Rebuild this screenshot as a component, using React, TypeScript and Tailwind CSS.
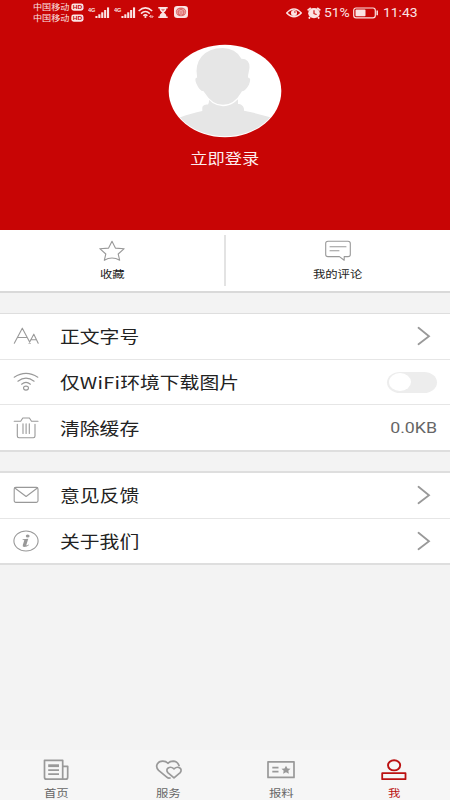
import React from 'react';

const outline = {
  fill: 'none',
  stroke: '#999999',
  strokeWidth: 1.1,
  strokeLinecap: 'round',
  strokeLinejoin: 'round',
} as const;

const Signal = () => (
  <svg viewBox="0 0 22 12" className="w-[22px] h-3" fill="#fbe3e3">
    <text x="0" y="4.9" fontSize="6.2" fontWeight="700" fontFamily="Liberation Sans, sans-serif" textLength="7.5" lengthAdjust="spacingAndGlyphs">
      4G
    </text>
    <rect x="7.4" y="9" width="2.1" height="2" />
    <rect x="10.3" y="7.3" width="2.1" height="3.7" />
    <rect x="13.2" y="5.3" width="2.1" height="5.7" />
    <rect x="16.1" y="3" width="2.1" height="8" />
    <rect x="19" y="0.4" width="2.1" height="10.6" />
  </svg>
);

const Carrier = () => (
  <div className="flex items-center h-[11px]">
    <div className="flex w-[37px] whitespace-nowrap">
      <span className="origin-left scale-x-[1.2] text-[7.6px] leading-[11px]">中国移动</span>
    </div>
    <svg viewBox="0 0 13 8" className="w-[13px] h-2 ml-px">
      <rect x="0.3" y="0.5" width="12.2" height="7.2" rx="2.4" fill="#fbe3e3" />
      <text x="1.7" y="6.3" fontSize="6" fontWeight="700" fill="#c80505" fontFamily="Liberation Sans, sans-serif" textLength="9.4" lengthAdjust="spacingAndGlyphs">
        HD
      </text>
    </svg>
  </div>
);

const StatusBar = () => (
  <div className="flex items-start justify-between h-[26px] pl-[33px] pr-8 text-[#fbe3e3]">
    <div className="flex items-start">
      <div className="mt-[1px]">
        <Carrier />
        <Carrier />
      </div>
      <div className="flex mt-[7px] ml-[4px]">
        <Signal />
        <div className="ml-[4px] mr-[2px]">
          <Signal />
        </div>
        <svg viewBox="0 0 17 12" className="w-[17px] h-3" fill="none" stroke="#fbe3e3" strokeWidth="1.5">
          <path d="M0.6 4 Q7.4 -2.3 14.2 4 M3 6.6 Q7.4 2.4 11.8 6.6 M5.3 8.8 Q7.4 7 9.5 8.8" />
          <circle cx="7.4" cy="10" r="1.1" fill="#fbe3e3" stroke="none" />
          <path d="M11.2 10 L12.7 8.4 L12.7 10.7 M14 8.4 L14 10.7 L15.4 9" strokeWidth="0.8" />
        </svg>
        <svg viewBox="0 0 10 12" className="w-[10px] h-3 ml-[3px]" fill="#fbe3e3">
          <path d="M0.3 0H9.7V1.5H8.4C8.4 3.8 7 4.8 5.8 5.5C7 6.3 8.4 7.3 8.4 9.4H9.7V10.9H0.3V9.4H1.6C1.6 7.3 3 6.3 4.2 5.5C3 4.8 1.6 3.8 1.6 1.5H0.3Z" />
          <path d="M2.9 2.2H7.1L5 4.1Z" fill="#c80505" opacity="0.6" />
        </svg>
        <svg viewBox="0 0 14 12" className="w-[14px] h-3 ml-[5.5px] -mt-[1px]">
          <rect width="14" height="12" rx="3.2" fill="#fbe3e3" />
          <ellipse cx="7" cy="5.8" rx="5.2" ry="4.4" fill="#dd6868" />
          <path d="M3.4 7.8C2.2 3.4 5 2.9 7 5C9 2.9 11.8 3.4 10.6 7.8M7 5V9.7M5.3 5.2V8.2M8.7 5.2V8.2" fill="none" stroke="#fbe3e3" strokeWidth="0.6" />
        </svg>
      </div>
    </div>
    <div className="flex items-center mt-[6px] h-[14px]">
      <svg viewBox="0 0 16 10" className="w-4 h-[10px]" fill="none" stroke="#fbe3e3">
        <path d="M0.7 5Q8 -3 15.3 5Q8 12.6 0.7 5Z" strokeWidth="1.4" />
        <circle cx="8" cy="4.9" r="3" fill="#fbe3e3" stroke="none" />
        <circle cx="8.9" cy="4" r="0.8" fill="#c80505" stroke="none" />
      </svg>
      <svg viewBox="0 0 14 12" className="w-[14px] h-3 ml-[5px]">
        <ellipse cx="7" cy="6.2" rx="5.8" ry="5.1" fill="#fbe3e3" />
        <path d="M0.6 3.3L3.8 0.8M13.4 3.3L10.2 0.8M3 10.1L1.8 11.6M11 10.1L12.2 11.6" stroke="#fbe3e3" strokeWidth="1.7" />
        <path d="M7 3.2V6.7L9.6 7.6" fill="none" stroke="#c80505" strokeWidth="1.1" />
      </svg>
      <div className="flex w-[28px] ml-[3px] whitespace-nowrap">
        <span className="origin-left scale-x-[1.13] font-['Roboto',sans-serif] text-[12.3px] leading-[14px]">51%</span>
      </div>
      <svg viewBox="0 0 26 12" className="w-[26px] h-3 ml-px">
        <rect x="0.7" y="1" width="21.6" height="9.8" rx="2.3" fill="none" stroke="#fbe3e3" strokeWidth="1.2" />
        <rect x="2.5" y="2.6" width="10" height="6.6" rx="0.8" fill="#fbe3e3" />
        <path d="M24.2 3.6V8.2" stroke="#fbe3e3" strokeWidth="1.5" />
      </svg>
      <div className="flex w-[35px] ml-[4px] whitespace-nowrap">
        <span className="origin-left scale-x-[1.13] font-['Roboto',sans-serif] text-[12.3px] leading-[14px]">11:43</span>
      </div>
    </div>
  </div>
);

const Avatar = () => (
  <svg viewBox="0 0 114 94" className="w-[114px] h-[94px]">
    <defs>
      <clipPath id="face">
        <ellipse cx="57" cy="47" rx="55.6" ry="45.3" />
      </clipPath>
    </defs>
    <ellipse cx="57" cy="47" rx="56.3" ry="46.2" fill="#ffffff" />
    <g clipPath="url(#face)" fill="#e6e6e6">
      <path d="M0 77L12.3 73.3C20 70.5 27 68.5 34.3 67V64C34.3 62 36 60.5 40 60.5C41 59 41 57.5 41 55.5H70V60C73 60 76 62 76 65.5V66.7C85 68.5 93 70.5 101.3 73L114 77V94H0Z" />
      <path
        d="M28.4 33C25.5 17 35 3.2 54.7 3.2C63 3.2 70.5 7.5 73.7 14C79 14 82.6 17.5 82.2 23.5C82 27 80.7 29.5 80.7 33C84 33.5 83 37.5 81.5 41C79.5 45 77 47.5 74.3 48C70 55.5 63 61.5 55 61.5C47 61.5 40 55.5 35.3 48C32 47.5 29.5 44 27.8 40C26.4 36.5 26 33.5 28.4 33Z"
        stroke="#ffffff"
        strokeWidth="1.4"
      />
    </g>
  </svg>
);

const Chevron = () => (
  <svg viewBox="0 0 14 20" className="w-[14px] h-5 mr-[6px]" fill="none" stroke="#999999" strokeWidth="1.8" strokeLinecap="round">
    <path d="M1.5 1.8L12 10.2L1.5 18.3" />
  </svg>
);

type RowProps = {
  icon: React.ReactNode;
  label: React.ReactNode;
  right: React.ReactNode;
};

const Row = ({ icon, label, right }: RowProps) => (
  <div className="flex flex-1 items-center px-[13px]">
    <svg viewBox="0 0 26 24" className="w-[26px] h-6" {...outline}>
      {icon}
    </svg>
    <div className="flex flex-1 ml-[20.7px] whitespace-nowrap">
      <span className="origin-left scale-x-[1.2] text-[16.5px] leading-6 text-[#222222]">{label}</span>
    </div>
    {right}
  </div>
);

type TabProps = {
  icon: React.ReactNode;
  label: string;
  active?: boolean;
};

const Tab = ({ icon, label, active }: TabProps) => (
  <div className={active ? 'flex flex-col items-center text-[#bb1111]' : 'flex flex-col items-center text-[#666666]'}>
    <svg
      viewBox="0 0 28 24"
      className={active ? 'w-7 h-6 mt-[7px] text-[#bb1111]' : 'w-7 h-6 mt-[7px] text-[#999999]'}
      fill="none"
      stroke="currentColor"
      strokeWidth="1.7"
      strokeLinejoin="round"
    >
      {icon}
    </svg>
    <span className="scale-x-[1.2] mt-[4px] text-[10.3px] leading-4">{label}</span>
  </div>
);

const App = () => {
  return (
    <div className="flex flex-col w-[450px] h-[800px] overflow-hidden bg-[#f3f3f3] font-['Noto_Sans_CJK_SC',sans-serif]">
      <div className="flex flex-col h-[230px] shrink-0 bg-[#c80505]">
        <StatusBar />
        <div className="flex flex-col items-center mt-[18px]">
          <Avatar />
          <span className="scale-x-[1.2] mt-[9.5px] text-[14.4px] leading-5 text-[#fdeeee]">立即登录</span>
        </div>
      </div>

      <div className="flex items-center h-[63px] shrink-0 bg-white border-b-2 border-[#d9d9d9] text-[#222222]">
        <div className="flex flex-col items-center w-[224px] pt-[1px]">
          <svg viewBox="0 0 28 22" className="w-7 h-[22px]" {...outline}>
            <path d="M14 1.3L17.4 8.1L26.2 8.7L20.2 14L21.7 20.3Q14 15.6 6.3 20.3L7.8 14L1.8 8.7L10.6 8.1Z" />
          </svg>
          <span className="scale-x-[1.2] mt-[4px] text-[10.3px] leading-4">收藏</span>
        </div>
        <div className="w-[2px] h-[51px] bg-[#e3e3e3]" />
        <div className="flex flex-col items-center w-[224px] pt-[1px]">
          <svg viewBox="0 0 28 22" className="w-7 h-[22px]" {...outline}>
            <path d="M4 1.3H24Q26.3 1.3 26.3 3.5V14.4Q26.3 16.6 24 16.6H20.2V20.3L15.4 16.6H4Q1.7 16.6 1.7 14.4V3.5Q1.7 1.3 4 1.3ZM6 6.8H22M6 10.7H15" />
          </svg>
          <span className="scale-x-[1.2] mt-[4px] text-[10.3px] leading-4">我的评论</span>
        </div>
      </div>

      <div className="flex flex-col h-[139px] mt-5 shrink-0 bg-white border-t border-b-2 border-[#dedede] divide-y divide-[#e6e6e6]">
        <Row
          label="正文字号"
          right={<Chevron />}
          icon={<path d="M1.3 19.2L9.3 4.2L17.3 19.2M5 13.5H14M16 19.2L20.8 10.2L25.2 19.2M17.6 15.8H23.6" />}
        />
        <Row
          label={
            <>
              仅<span className="tracking-[0.25px]">WiFi</span>环境下载图片
            </>
          }
          right={
            <div className="flex items-center w-[50px] h-[21px] px-[1.5px] rounded-[13px/10.5px] bg-[#ededed]">
              <div className="w-[22.5px] h-[18.5px] rounded-[50%] bg-white" />
            </div>
          }
          icon={
            <>
              <path d="M1.2 7.2Q13 -0.5 24.8 7.2M4.9 11.2Q13 5 21.1 11.2M8.6 14.2Q13 10.6 17.4 14.2" />
              <ellipse cx="13" cy="18.1" rx="2.5" ry="2" />
            </>
          }
        />
        <Row
          label="清除缓存"
          right={
            <div className="flex justify-end w-[47px] whitespace-nowrap">
              <span className="origin-right scale-x-[1.2] font-['Roboto',sans-serif] text-[14.8px] leading-5 text-[#666666]">0.0KB</span>
            </div>
          }
          icon={<path d="M1.2 5.2H7.7L9.8 2H16.4L18.5 5.2H25M4.3 8.2V20Q4.3 21.7 6 21.7H20.4Q22 21.7 22 20V8.2M10 7.8V17.5M13.1 7.8V17.5M16.3 7.8V17.5" />}
        />
      </div>

      <div className="flex flex-col h-[94px] mt-[19px] shrink-0 bg-white border-t-2 border-b-2 border-[#dedede] divide-y divide-[#e6e6e6]">
        <Row
          label="意见反馈"
          right={<Chevron />}
          icon={
            <>
              <rect x="1.2" y="4.4" width="23.8" height="15" rx="1.6" />
              <path d="M1.8 5L13.1 13.5L24.4 5" />
            </>
          }
        />
        <Row
          label="关于我们"
          right={<Chevron />}
          icon={
            <>
              <ellipse cx="13" cy="12" rx="12.1" ry="10" />
              <g fill="#999999" stroke="none">
                <ellipse cx="14.7" cy="7" rx="1.9" ry="1.5" />
                <path d="M9.6 10.2L15.3 9.7L13.3 16.1Q13.2 17 15.8 15.6L16.1 16Q14 18 11.2 18Q9.2 17.8 9.8 16L11.3 11.2L9.4 10.8Z" />
              </g>
            </>
          }
        />
      </div>

      <div className="grid grid-cols-4 h-[50px] mt-auto shrink-0 bg-[#f6f6f6]">
        <Tab
          label="首页"
          icon={
            <>
              <path d="M2.5 3.3H20.7V22.2H4.5Q2.5 22.2 2.5 20.2ZM20.7 9.3H25.7V20.2Q25.7 22.2 23.7 22.2H18.7" />
              <path d="M6.2 8.7H17" strokeWidth="2.8" />
              <path d="M6.2 13.2H17M6.2 17.2H17" />
            </>
          }
        />
        <Tab
          label="服务"
          icon={
            <>
              <path d="M15.6 20.6Q13.8 22 11.8 20.2L3.6 13.4C-0.6 9 2.8 4.1 7.8 4.1Q11 4.1 12.9 6.3Q15 4.1 18.2 4.1Q22.6 4.2 24.3 9.2" />
              <path d="M19 20.8L12.8 15.6C9.8 11.8 14.8 8.2 19 11.9C23.2 8.2 28.2 11.8 25.2 15.6Z" />
            </>
          }
        />
        <Tab
          label="报料"
          icon={
            <>
              <rect x="1" y="4.8" width="26" height="15.6" />
              <path d="M5.3 10.7H11.5M5.3 14.7H11.5" />
              <path d="M19 8.7L20.5 11.4L23.5 11.7L21.3 13.8L21.9 16.7L19 15.3L16.1 16.7L16.7 13.8L14.5 11.7L17.5 11.4Z" fill="currentColor" stroke="none" />
            </>
          }
        />
        <Tab
          label="我"
          active
          icon={
            <>
              <ellipse cx="14.1" cy="8.3" rx="6.1" ry="5.1" strokeWidth="1.9" />
              <rect x="2.2" y="16.2" width="23.3" height="6" strokeWidth="1.8" />
            </>
          }
        />
      </div>
    </div>
  );
};

export default App;
